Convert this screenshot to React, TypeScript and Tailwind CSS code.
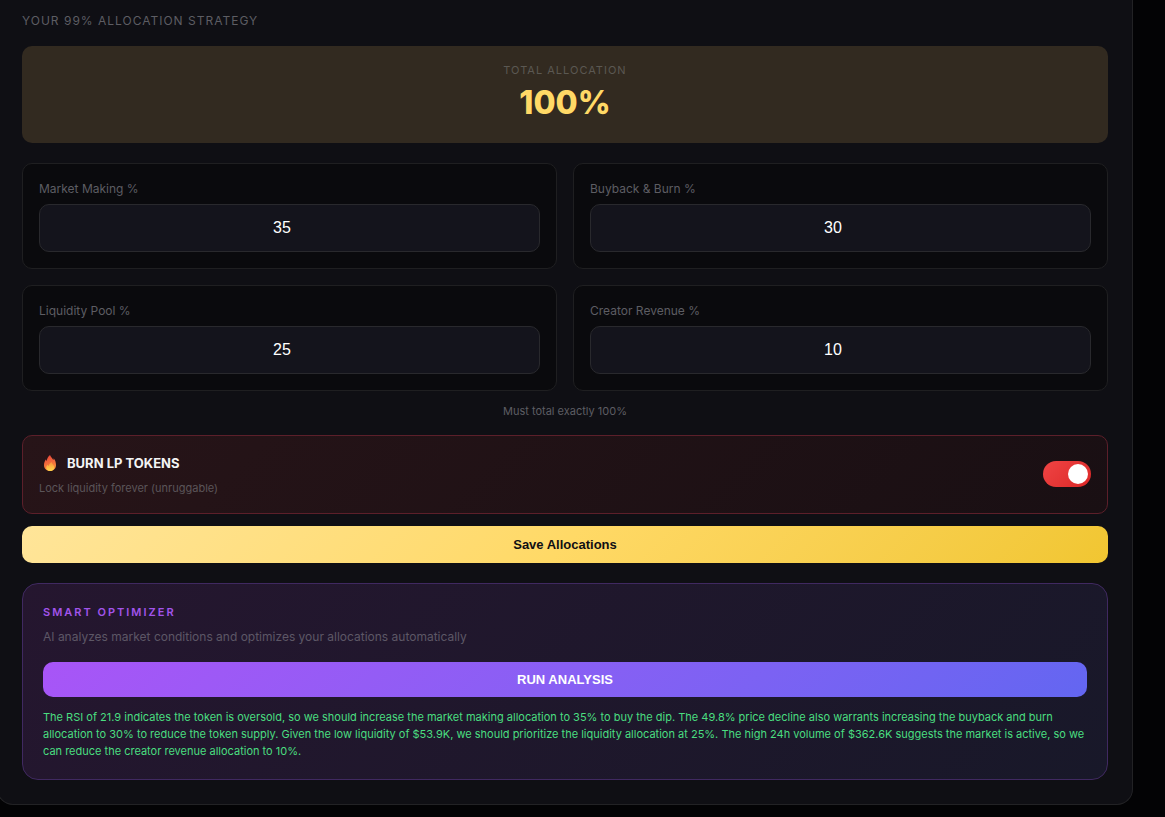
import { useState } from 'react';

interface Allocation {
  id: string;
  label: string;
  value: string;
}

const INITIAL_ALLOCATIONS: Allocation[] = [
  { id: 'market-making', label: 'Market Making %', value: '35' },
  { id: 'buyback-burn', label: 'Buyback & Burn %', value: '30' },
  { id: 'liquidity-pool', label: 'Liquidity Pool %', value: '25' },
  { id: 'creator-revenue', label: 'Creator Revenue %', value: '10' },
];

const ANALYSIS =
  'The RSI of 21.9 indicates the token is oversold, so we should increase the market making allocation to 35% to buy the dip. The 49.8% price decline also warrants increasing the buyback and burn allocation to 30% to reduce the token supply. Given the low liquidity of $53.9K, we should prioritize the liquidity allocation at 25%. The high 24h volume of $362.6K suggests the market is active, so we can reduce the creator revenue allocation to 10%.';

function FlameIcon() {
  return (
    <svg viewBox="0 0 24 32" className="h-4 w-3" aria-hidden="true">
      <defs>
        <linearGradient id="flame-outer" x1="0.3" y1="0" x2="0.6" y2="1">
          <stop offset="0" stopColor="#e8433a" />
          <stop offset="0.55" stopColor="#f4713c" />
          <stop offset="1" stopColor="#fb9a3c" />
        </linearGradient>
        <linearGradient id="flame-inner" x1="0.5" y1="0" x2="0.5" y2="1">
          <stop offset="0" stopColor="#fb923c" />
          <stop offset="1" stopColor="#ffd84a" />
        </linearGradient>
      </defs>
      <path
        d="M12 0c1 4 5 6 6.500 10c.8-1 1-2 .8-3.500C22.500 10 24 15 24 20c0 7-5 12-12 12S0 27 0 20.500C0 16 1.500 12 4 8.500c.2 1.500.6 2.500 1.500 3.500C6 7 8 3 12 0z"
        fill="url(#flame-outer)"
      />
      <path
        d="M15 14c.5 4 5.500 5.500 5.500 10.500c0 4.500-3.500 7.500-8 7.500s-8-2.500-8-7c0-2.500 1.500-4 3-5.500c.3 1.500 1 2 2 2.500C9.500 19 12 17 15 14z"
        fill="url(#flame-inner)"
      />
    </svg>
  );
}

function AllocationField({
  allocation,
  onChange,
}: {
  allocation: Allocation;
  onChange: (value: string) => void;
}) {
  return (
    <div className="rounded-[10px] border border-[#1f1f21] bg-[#0a0a0d] p-4">
      <label htmlFor={allocation.id} className="block pb-1.5 text-[12px] leading-[18px] text-[#5d5d63]">
        {allocation.label}
      </label>
      <input
        id={allocation.id}
        type="number"
        min={0}
        max={100}
        value={allocation.value}
        onChange={(e) => onChange(e.target.value)}
        className="block h-12 w-full rounded-[10px] border border-[#29292d] bg-[#14141c] px-3 text-center font-['Liberation_Sans',Arial,sans-serif] text-[16px] text-white outline-none"
      />
    </div>
  );
}

function BurnToggle() {
  const [burn, setBurn] = useState(true);

  return (
    <div className="mt-4 flex items-start justify-between rounded-[10px] border border-[#5c1f2a] bg-linear-135 from-[#271418] to-[#190f13] p-4">
      <div>
        <label htmlFor="burn-lp" className="flex items-center gap-[11px] pl-[5px] text-[13px] leading-[22px] font-bold text-[#f4f4f5]">
          <FlameIcon />
          BURN LP TOKENS
        </label>
        <p className="mt-1.5 text-[11px] leading-[17px] text-[#5b5559]">Lock liquidity forever (unruggable)</p>
      </div>
      <span className="relative mt-[9px] flex h-[26px] w-12 shrink-0">
        <input
          id="burn-lp"
          type="checkbox"
          role="switch"
          checked={burn}
          onChange={(e) => setBurn(e.target.checked)}
          className="peer h-full w-full cursor-pointer appearance-none rounded-full bg-[#2a2a30] checked:bg-linear-135 checked:from-[#ef4444] checked:to-[#dc2626]"
        />
        <span className="pointer-events-none absolute top-[3px] left-[3px] size-5 rounded-full bg-white peer-checked:left-[25px]" />
      </span>
    </div>
  );
}

function SmartOptimizer() {
  return (
    <section className="mt-5 rounded-2xl border border-[#402961] bg-linear-135 from-[#25162f] to-[#181829] px-5 pt-5 pb-[19px]">
      <h3 className="text-[11px] leading-4 font-semibold tracking-[2px] text-[#a254eb]">SMART OPTIMIZER</h3>
      <p className="mt-2 text-[12px] leading-[18px] text-[#5d5766]">
        AI analyzes market conditions and optimizes your allocations automatically
      </p>
      <button
        type="button"
        className="mt-4 block h-[35px] w-full rounded-[10px] bg-linear-135 from-[#a855f7] to-[#6366f1] font-['Liberation_Sans',Arial,sans-serif] text-[13px] font-bold text-white"
      >
        RUN ANALYSIS
      </button>
      <p className="mt-3 text-[11px] leading-[17px] text-[#4ade80]">{ANALYSIS}</p>
    </section>
  );
}

export default function App() {
  const [allocations, setAllocations] = useState(INITIAL_ALLOCATIONS);

  const total = allocations.reduce((sum, a) => sum + (Number(a.value) || 0), 0);

  const updateAllocation = (id: string, value: string) => {
    setAllocations((prev) => prev.map((a) => (a.id === id ? { ...a, value } : a)));
  };

  return (
    <div className="min-h-screen overflow-hidden bg-[#030305] pr-8 font-[Inter,'Liberation_Sans',sans-serif]">
      {/* Card runs off the top and left edges of the page */}
      <main className="-ml-[3px] rounded-b-2xl border border-t-0 border-[#222225] bg-[#0f0f14] px-6 pt-3 pb-6">
        <h2 className="text-[12px] leading-[18px] tracking-[1px] text-[#5d5d63]">YOUR 99% ALLOCATION STRATEGY</h2>

        <div className="mt-4 rounded-[10px] bg-[#322a20] px-4 py-4 text-center">
          <p className="text-[11px] leading-4 tracking-[1px] text-[#5b5852]">TOTAL ALLOCATION</p>
          <p className="text-[32px] leading-[49px] font-extrabold text-[#ffd966]">{total}%</p>
        </div>

        <div className="mt-5 grid grid-cols-2 gap-4">
          {allocations.map((allocation) => (
            <AllocationField
              key={allocation.id}
              allocation={allocation}
              onChange={(value) => updateAllocation(allocation.id, value)}
            />
          ))}
        </div>

        <p className="mt-3 text-center text-[11px] leading-4 text-[#5d5d63]">Must total exactly 100%</p>

        <BurnToggle />

        <button
          type="button"
          className="mt-3 block h-[37px] w-full rounded-[10px] bg-linear-135 from-[#ffe599] via-[#ffd966] to-[#f1c631] font-['Liberation_Sans',Arial,sans-serif] text-[13px] font-bold text-[#0f0f14]"
        >
          Save Allocations
        </button>

        <SmartOptimizer />
      </main>
    </div>
  );
}
